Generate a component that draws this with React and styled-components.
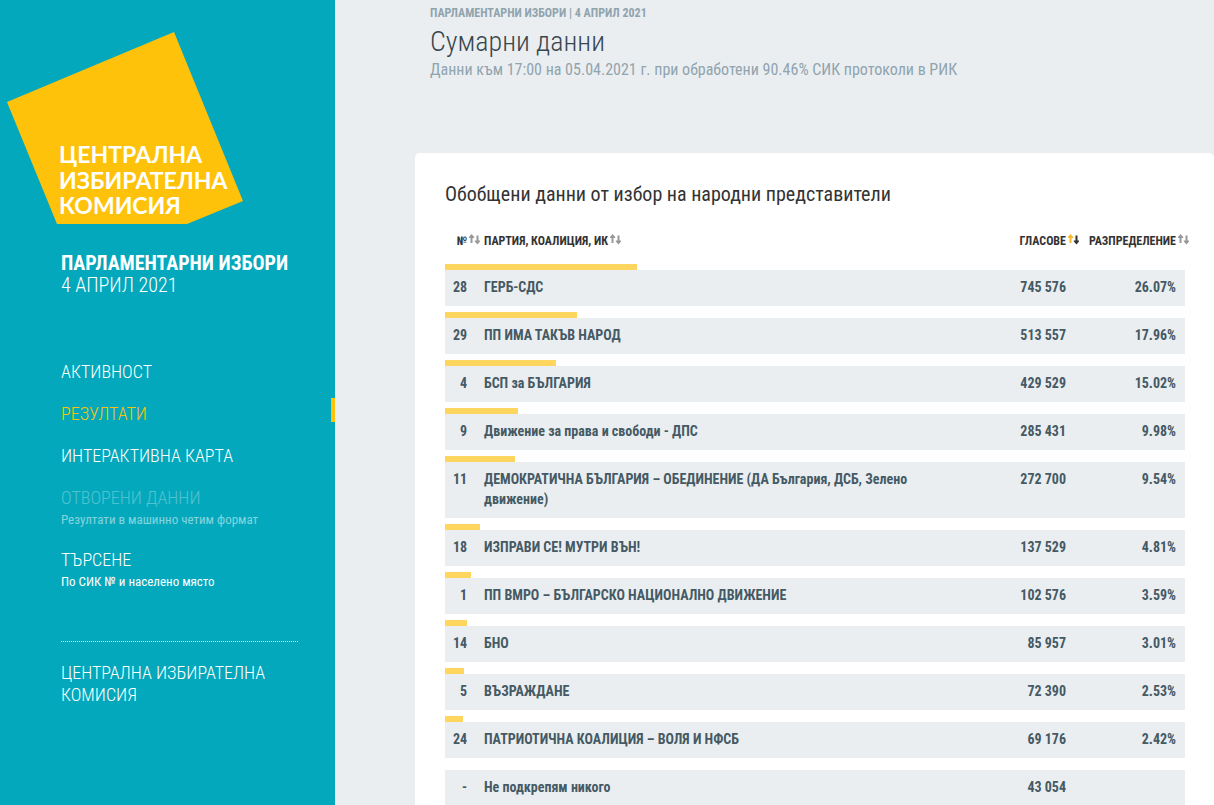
import styled, { createGlobalStyle } from "styled-components";

const GlobalStyle = createGlobalStyle`
    *{
        box-sizing: border-box;
    }

    body{
        margin: 0;
        background-color: #ebeef1;
        font-family: "Roboto Condensed", "Liberation Sans Narrow", Roboto, sans-serif;
        color: #455a64;
    }

    h1, h2, p, ul{
        margin: 0;
        padding: 0;
    }
`

const Page = styled.div`
    display: grid;
    grid-template-columns: 335px 1fr;
    min-height: 100vh;
`

const Sidebar = styled.aside`
    background-color: #03a8bc;
    color: white;
`

const LogoLink = styled.a`
    display: block;

    svg{
        display: block;
    }
`

const LogoText = styled.text`
    fill: white;
    font-family: Lato, "Open Sans", sans-serif;
    font-size: 23px;
    font-weight: 700;
`

const SidebarBody = styled.div`
    padding: 28px 37px 28px 61px;
`

const Election = styled.div`
    font-size: 20px;
    line-height: 22px;
    font-weight: 300;
    text-transform: uppercase;

    strong{
        display: block;
        font-weight: 700;
    }
`

const Menu = styled.ul`
    list-style: none;
    display: grid;
    gap: 18px;
    padding: 64px 0 49px;
`

const MenuItem = styled.li`
    position: relative;
    margin-right: -37px;

    &::after{
        content: "";
        display: ${props => props.$active ? "block" : "none"};
        position: absolute;
        top: -4px;
        right: 0;
        width: 4px;
        height: 24px;
        background-color: #ffc20a;
    }
`

const MenuLink = styled.a`
    display: block;
    color: ${props => props.$active ? "#ffc20a" : "white"};
    opacity: ${props => props.$faded ? 0.3 : 1};
    font-size: 18px;
    line-height: 24px;
    font-weight: 300;
    text-decoration: none;
    text-transform: uppercase;
`

const MenuNote = styled.p`
    font-size: 13px;
    line-height: 20px;
    opacity: ${props => props.$faded ? 0.5 : 1};
`

const SidebarFooter = styled.div`
    border-top: 1px dotted white;
    padding-top: 20px;
`

const FooterLink = styled(MenuLink)`
    line-height: 22px;
`

const Main = styled.main`
    padding-left: 80px;
`

const PageHeader = styled.header`
    padding: 4px 15px 75px;
`

const Overline = styled.p`
    font-size: 12px;
    line-height: 18px;
    font-weight: 700;
    color: #90a4ae;
    text-transform: uppercase;
`

const Title = styled.h1`
    font-size: 28px;
    line-height: 40px;
    font-weight: 300;
    color: #37474f;
`

const Subtitle = styled.p`
    font-size: 16px;
    line-height: 16px;
    color: #90a4ae;
`

const Card = styled.section`
    background-color: white;
    border-radius: 5px;
    padding: 29px 29px 30px 30px;
`

const CardTitle = styled.h2`
    font-size: 20px;
    line-height: 24px;
    font-weight: 400;
    color: #333333;
`

const Table = styled.table`
    width: 100%;
    margin-top: 17px;
    border-collapse: collapse;
    table-layout: fixed;
    font-size: 14px;
    line-height: 20px;
    font-weight: 700;
`

const Col = styled.col`
    width: ${props => props.$width};
`

const HeadCell = styled.th`
    padding: 7px 9px 7px 8px;
    text-align: ${props => props.$align || "left"};
    color: #333333;
`

const SortButton = styled.button`
    display: inline-flex;
    align-items: center;
    gap: 2px;
    margin-right: -13px;
    padding: 0;
    border: none;
    background: none;
    color: inherit;
    font-family: inherit;
    font-size: 12px;
    line-height: 20px;
    font-weight: 700;
    text-transform: uppercase;
    white-space: nowrap;

    svg{
        margin-bottom: 3px;
    }
`

const BarCell = styled.td`
    height: 12px;
    padding: 6px 4px 0 0;
`

const Bar = styled.div`
    height: 6px;
    background-color: #fed55f;
`

const Cell = styled.td`
    padding: 7px 9px 9px 8px;
    background-color: #ebeef1;
    text-align: ${props => props.$align || "left"};
    vertical-align: top;
`

const menu = [
    { label: "Активност" },
    { label: "Резултати", active: true },
    { label: "Интерактивна карта" },
    { label: "Отворени данни", note: "Резултати в машинно четим формат", faded: true },
    { label: "Търсене", note: "По СИК № и населено място" },
]

const parties = [
    { number: "28", name: "ГЕРБ-СДС", votes: "745 576", share: 26.07 },
    { number: "29", name: "ПП ИМА ТАКЪВ НАРОД", votes: "513 557", share: 17.96 },
    { number: "4", name: "БСП за БЪЛГАРИЯ", votes: "429 529", share: 15.02 },
    { number: "9", name: "Движение за права и свободи - ДПС", votes: "285 431", share: 9.98 },
    { number: "11", name: "ДЕМОКРАТИЧНА БЪЛГАРИЯ – ОБЕДИНЕНИЕ (ДА България, ДСБ, Зелено движение)", votes: "272 700", share: 9.54 },
    { number: "18", name: "ИЗПРАВИ СЕ! МУТРИ ВЪН!", votes: "137 529", share: 4.81 },
    { number: "1", name: "ПП ВМРО – БЪЛГАРСКО НАЦИОНАЛНО ДВИЖЕНИЕ", votes: "102 576", share: 3.59 },
    { number: "14", name: "БНО", votes: "85 957", share: 3.01 },
    { number: "5", name: "ВЪЗРАЖДАНЕ", votes: "72 390", share: 2.53 },
    { number: "24", name: "ПАТРИОТИЧНА КОАЛИЦИЯ – ВОЛЯ И НФСБ", votes: "69 176", share: 2.42 },
    { number: "-", name: "Не подкрепям никого", votes: "43 054" },
]

function Logo(){
    return(
        <svg width="250" height="224" viewBox="0 0 250 224" role="img" aria-label="Централна избирателна комисия">
            <path fill="#ffc20a" d="M174 32 L7 102 L57 224 H187 L243 201 Z"/>
            <LogoText x="59" y="163">ЦЕНТРАЛНА</LogoText>
            <LogoText x="59" y="189">ИЗБИРАТЕЛНА</LogoText>
            <LogoText x="59" y="214">КОМИСИЯ</LogoText>
        </svg>
    )
}

function SortIcon({ up = "#999999", down = "#999999" }){
    return(
        <svg width="11" height="11" viewBox="0 0 11 11" aria-hidden="true">
            <path fill={up} d="M1.5 9 V4 H0 V3 L2.5 0 L5.2 3 V4 H3.5 V9 Z"/>
            <path fill={down} d="M7.5 1.5 H9.5 V6.5 H11 V7.5 L8.5 10.5 L5.8 7.5 V6.5 H7.5 Z"/>
        </svg>
    )
}

function App(){

    return(
        <Page lang="bg">
            <GlobalStyle/>
            <Sidebar>
                <LogoLink href="#"><Logo/></LogoLink>
                <SidebarBody>
                    <Election><strong>Парламентарни избори</strong>4 април 2021</Election>
                    <nav>
                        <Menu>
                            {menu.map(item => (
                                <MenuItem key={item.label} $active={item.active}>
                                    <MenuLink href="#" $active={item.active} $faded={item.faded}>{item.label}</MenuLink>
                                    {item.note && <MenuNote $faded={item.faded}>{item.note}</MenuNote>}
                                </MenuItem>
                            ))}
                        </Menu>
                    </nav>
                    <SidebarFooter>
                        <FooterLink href="#">Централна избирателна комисия</FooterLink>
                    </SidebarFooter>
                </SidebarBody>
            </Sidebar>
            <Main>
                <PageHeader>
                    <Overline>Парламентарни избори | 4 април 2021</Overline>
                    <Title>Сумарни данни</Title>
                    <Subtitle>Данни към 17:00 на 05.04.2021 г. при обработени 90.46% СИК протоколи в РИК</Subtitle>
                </PageHeader>
                <Card>
                    <CardTitle>Обобщени данни от избор на народни представители</CardTitle>
                    <Table>
                        <colgroup>
                            <Col $width="31px"/>
                            <Col/>
                            <Col $width="120px"/>
                            <Col $width="110px"/>
                        </colgroup>
                        <thead>
                            <tr>
                                <HeadCell $align="right"><SortButton>№<SortIcon/></SortButton></HeadCell>
                                <HeadCell><SortButton>Партия, коалиция, ИК<SortIcon/></SortButton></HeadCell>
                                <HeadCell $align="right"><SortButton>Гласове<SortIcon up="#fbb829" down="#333333"/></SortButton></HeadCell>
                                <HeadCell $align="right"><SortButton>Разпределение<SortIcon/></SortButton></HeadCell>
                            </tr>
                        </thead>
                        {parties.map(party => (
                            <tbody key={party.number}>
                                <tr>
                                    <BarCell colSpan={4}>
                                        {party.share && <Bar style={{ width: `${party.share}%` }}/>}
                                    </BarCell>
                                </tr>
                                <tr>
                                    <Cell $align="right">{party.number}</Cell>
                                    <Cell>{party.name}</Cell>
                                    <Cell $align="right">{party.votes}</Cell>
                                    <Cell $align="right">{party.share && `${party.share.toFixed(2)}%`}</Cell>
                                </tr>
                            </tbody>
                        ))}
                    </Table>
                </Card>
            </Main>
        </Page>
    )
}

export default App
